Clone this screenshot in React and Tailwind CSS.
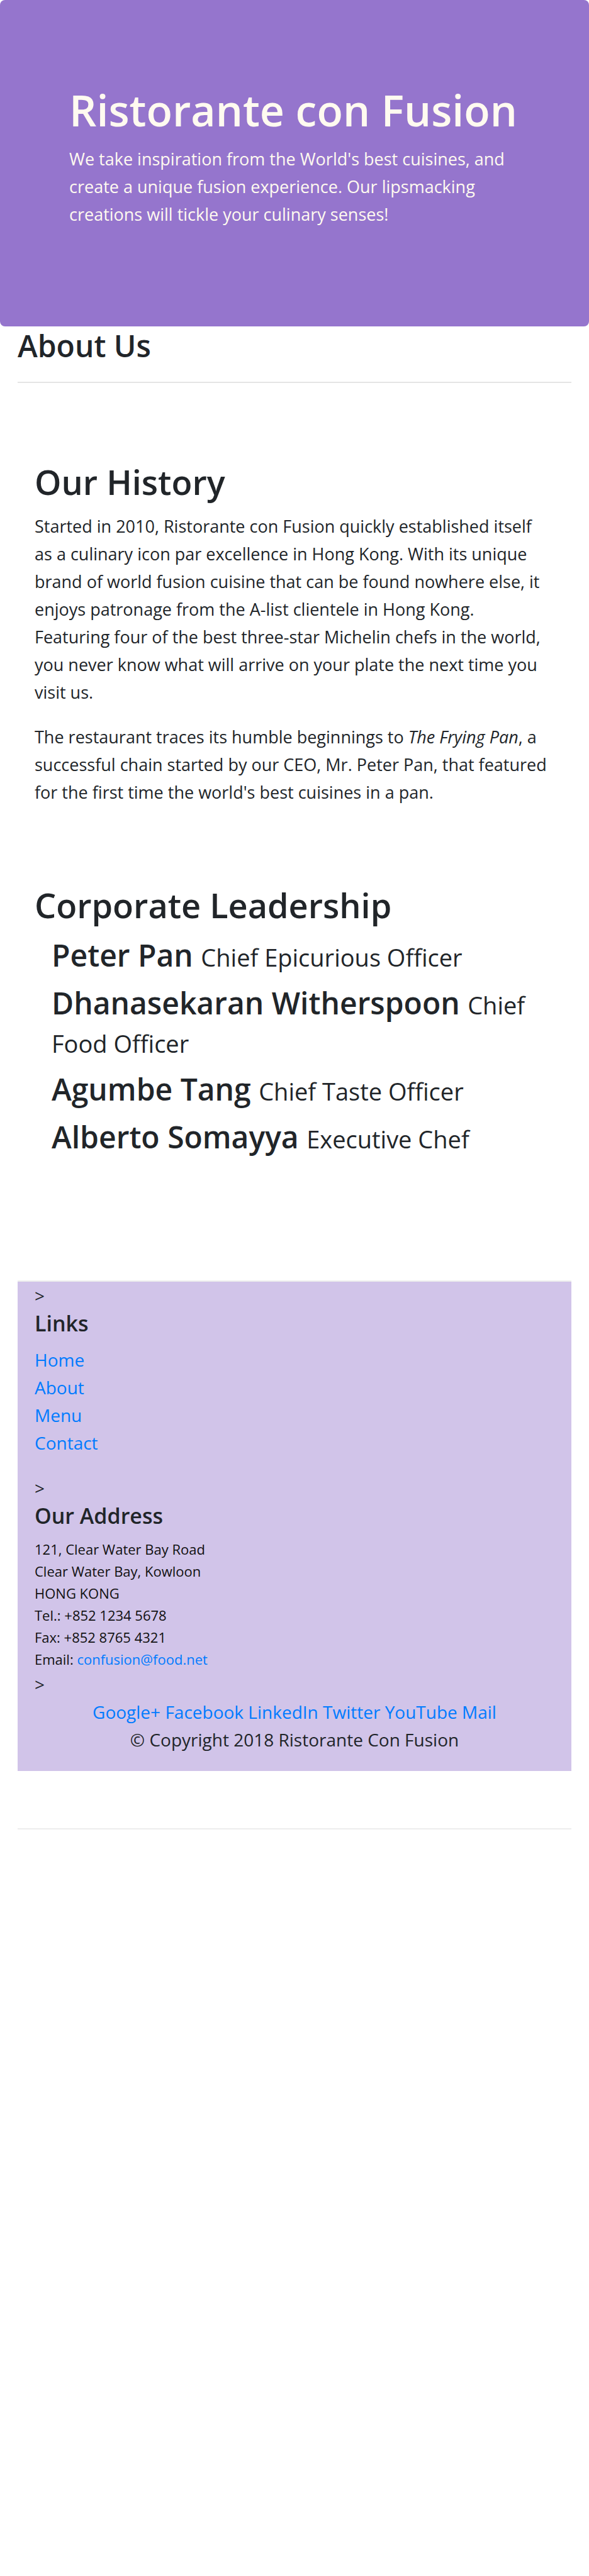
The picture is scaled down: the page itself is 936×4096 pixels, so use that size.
const leaders = [
  { name: "Peter Pan", role: "Chief Epicurious Officer" },
  { name: "Dhanasekaran Witherspoon", role: "Chief Food Officer" },
  { name: "Agumbe Tang", role: "Chief Taste Officer" },
  { name: "Alberto Somayya", role: "Executive Chef" },
];

const links = ["Home", "About", "Menu", "Contact"];
const socials = ["Google+", "Facebook", "LinkedIn", "Twitter", "YouTube", "Mail"];

export default function App() {
  return (
    <div className="min-h-screen bg-white font-['Open_Sans',sans-serif] text-[28px] leading-[44px] text-[#212529]">
      <header className="rounded-lg bg-[#9575cd] px-[110px] pt-[131px] pb-[156px] text-[#fffaf0]">
        <h1 className="mb-[13px] text-[68px] leading-[87px] font-semibold">Ristorante con Fusion</h1>
        <p className="text-[27px]">
          We take inspiration from the World's best cuisines, and create a unique fusion experience. Our lipsmacking
          creations will tickle your culinary senses!
        </p>
      </header>

      <main className="px-7">
        <h3 className="mb-[26px] text-[48px] leading-[62px] font-semibold">About Us</h3>
        <hr className="border-t-2 border-[#e5e5e5]" />

        <section className="mt-[122px] px-[27px]">
          <h2 className="mb-[14px] text-[54px] leading-[70px] font-semibold">Our History</h2>
          <p className="mb-[27px] text-[27px]">
            Started in 2010, Ristorante con Fusion quickly established itself
            <br />
            as a culinary icon par excellence in Hong Kong. With its unique brand of world fusion cuisine that can be
            found nowhere else, it enjoys patronage from the A-list clientele in Hong Kong.
            <br />
            Featuring four of the best three-star Michelin chefs in the world,
            <br />
            you never know what will arrive on your plate the next time you
            <br />
            visit us.
          </p>
          <p className="text-[27px]">
            The restaurant traces its humble beginnings to <em>The Frying Pan</em>, a successful chain started by our
            CEO, Mr. Peter Pan, that featured for the first time the world's best cuisines in a pan.
          </p>
        </section>

        <section className="mt-[122px] px-[27px]">
          <h2 className="mb-[14px] text-[54px] leading-[70px] font-semibold">Corporate Leadership</h2>
          <ul className="flex flex-col gap-[15px] px-[27px]">
            {leaders.map((l) => (
              <li key={l.name}>
                <h3 className="text-[48px] leading-[61px] font-semibold">
                  {l.name} <small className="text-[38px] leading-none font-normal">{l.role}</small>
                </h3>
              </li>
            ))}
          </ul>
        </section>

        <hr className="mt-[198px] border-t-2 border-[#ededed]" />
      </main>

      <footer className="mx-7 bg-[#d1c4e9] px-[27px] pb-7">
        <div>&gt;</div>
        <h5 className="mb-[14px] text-[34px] leading-[44px] font-semibold">Links</h5>
        <ul className="mb-7">
          {links.map((l) => (
            <li key={l}>
              <a href="#" className="text-[#007bff]">{l}</a>
            </li>
          ))}
        </ul>
        <div>&gt;</div>
        <h5 className="mb-[14px] text-[34px] leading-[44px] font-semibold">Our Address</h5>
        <address className="text-[22px] leading-[35px] text-[#111111] not-italic">
          121, Clear Water Bay Road
          <br />
          Clear Water Bay, Kowloon
          <br />
          HONG KONG
          <br />
          Tel.: +852 1234 5678
          <br />
          Fax: +852 8765 4321
          <br />
          Email: <a href="mailto:confusion@food.net" className="text-[#007bff]">confusion@food.net</a>
        </address>
        <div>&gt;</div>
        <nav className="text-center">
          {socials.map((s, i) => (
            <span key={s}>
              {i > 0 && " "}
              <a href="#" className="text-[#007bff]">{s}</a>
            </span>
          ))}
        </nav>
        <p className="text-center">© Copyright 2018 Ristorante Con Fusion</p>
      </footer>

      <div className="mx-7 mt-[91px]">
        <hr className="border-t-2 border-[#ededed]" />
      </div>
    </div>
  );
}
